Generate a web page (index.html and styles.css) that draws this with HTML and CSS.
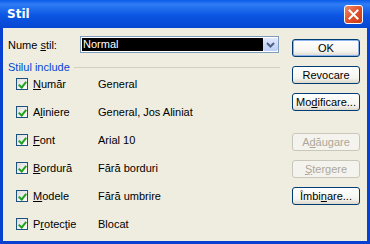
FILE: index.html
```html
<!DOCTYPE html>
<html lang="ro">
<head>
    <meta charset="UTF-8">
    <title>Stil</title>
    <link rel="stylesheet" href="styles.css">
</head>
<body>
    <div class="window">
        <div class="titlebar">
            <span class="title">Stil</span>
            <span class="close">
                <svg width="11" height="11" viewBox="0 0 11 11"><path d="M1.5 1.5 L9.5 9.5 M9.5 1.5 L1.5 9.5" stroke="#fff" stroke-width="2" stroke-linecap="square"/></svg>
            </span>
        </div>
        <div class="body">
            <div class="left">
                <div class="name-row">
                    <label class="name-label">Nume <u>s</u>til:</label>
                    <div class="combo">
                        <div class="combo-text">Normal</div>
                        <div class="combo-btn">
                            <svg width="9" height="6" viewBox="0 0 9 6"><path d="M1 1 L4.5 4.5 L8 1" fill="none" stroke="#4d6185" stroke-width="2"/></svg>
                        </div>
                    </div>
                </div>
                <div class="group-head">
                    <span>Stilul include</span>
                    <span class="group-line"></span>
                </div>
                <div class="rows">
                    <div class="row"><span class="check"></span><span class="lbl"><u>N</u>umăr</span><span class="val">General</span></div>
                    <div class="row"><span class="check"></span><span class="lbl">A<u>l</u>iniere</span><span class="val">General, Jos Aliniat</span></div>
                    <div class="row"><span class="check"></span><span class="lbl"><u>F</u>ont</span><span class="val">Arial 10</span></div>
                    <div class="row"><span class="check"></span><span class="lbl"><u>B</u>ordură</span><span class="val">Fără borduri</span></div>
                    <div class="row"><span class="check"></span><span class="lbl"><u>M</u>odele</span><span class="val">Fără umbrire</span></div>
                    <div class="row"><span class="check"></span><span class="lbl">P<u>r</u>otecţie</span><span class="val">Blocat</span></div>
                </div>
            </div>
            <div class="buttons">
                <button class="btn default">OK</button>
                <button class="btn">Revocare</button>
                <button class="btn">Mo<u>d</u>ificare...</button>
                <button class="btn disabled spaced">A<u>d</u>ăugare</button>
                <button class="btn disabled"><u>Ş</u>tergere</button>
                <button class="btn">Îmbi<u>n</u>are...</button>
            </div>
        </div>
    </div>
</body>
</html>
```

FILE: styles.css
```css
body {
    margin: 0;
    padding: 0;
    font-family: "Liberation Sans", Arial, sans-serif;
    font-size: 11px;
    color: #000;
}

.window {
    width: 370px;
    height: 244px;
    box-sizing: border-box;
    background: #0841d0;
    padding: 0 3px 3px 3px;
    display: flex;
    flex-direction: column;
}

.titlebar {
    height: 28px;
    display: flex;
    align-items: center;
    justify-content: space-between;
    background: linear-gradient(#0a5be8, #2f7cf5 15%, #0b56e3 55%, #0647d2);
    margin: 0 -3px;
    padding: 0 7px 0 7px;
}

.title {
    color: #fff;
    font-family: "DejaVu Sans", sans-serif;
    font-weight: bold;
    font-size: 12px;
}

.close {
    width: 19px;
    height: 19px;
    box-sizing: border-box;
    border: 1px solid #fff;
    border-radius: 3px;
    background: linear-gradient(135deg, #f08a6a, #e0512c 50%, #c63a16);
    display: flex;
    align-items: center;
    justify-content: center;
}

.body {
    flex: 1;
    background: #efede0;
    display: flex;
    padding: 8px 7px 0 5px;
}

.left {
    width: 284px;
}

.name-row {
    display: flex;
    align-items: center;
    height: 17px;
}

.name-label {
    width: 72px;
}

.combo {
    width: 199px;
    height: 17px;
    box-sizing: border-box;
    border: 1px solid #7f9db9;
    background: #fff;
    display: flex;
    padding: 1px 0 1px 1px;
}

.combo-text {
    flex: 1;
    background: #000;
    color: #fff;
    line-height: 13px;
    padding-left: 1px;
}

.combo-btn {
    width: 15px;
    background: linear-gradient(#dfe8fd, #bccdf6);
    border-radius: 2px;
    display: flex;
    align-items: center;
    justify-content: center;
}

.group-head {
    margin-top: 8px;
    height: 12px;
    display: flex;
    align-items: center;
    color: #0046d5;
}

.group-line {
    flex: 1;
    height: 1px;
    background: #d0d0bf;
    margin-left: 4px;
    margin-right: 12px;
}

.rows {
    margin-top: 3px;
    padding-left: 8px;
    display: flex;
    flex-direction: column;
    gap: 12px;
}

.row {
    height: 16px;
    display: flex;
    align-items: center;
}

.check {
    width: 12px;
    height: 12px;
    box-sizing: border-box;
    border: 1px solid #1c5180;
    background: linear-gradient(135deg, #dcdcd7, #fff);
    position: relative;
}

.check::after {
    content: "";
    position: absolute;
    left: 3px;
    top: 1px;
    width: 3px;
    height: 6px;
    border-right: 2px solid #21a121;
    border-bottom: 2px solid #21a121;
    transform: rotate(40deg);
}

.lbl {
    margin-left: 5px;
    width: 65px;
}

.buttons {
    margin-top: 3px;
    display: flex;
    flex-direction: column;
    gap: 9px;
}

.btn {
    width: 68px;
    height: 18px;
    box-sizing: border-box;
    border: 1px solid #003c74;
    border-radius: 3px;
    background: linear-gradient(#ffffff, #f5f4ef 70%, #dcd8ca);
    font-family: "Liberation Sans", Arial, sans-serif;
    font-size: 11px;
    color: #000;
    padding: 0;
}

.btn.default {
    box-shadow: inset 0 0 0 1px #8db2f0;
}

.btn.spaced {
    margin-top: 13px;
}

.btn.disabled {
    border-color: #c9c7ba;
    background: #f4f3ee;
    color: #aca899;
}
```
